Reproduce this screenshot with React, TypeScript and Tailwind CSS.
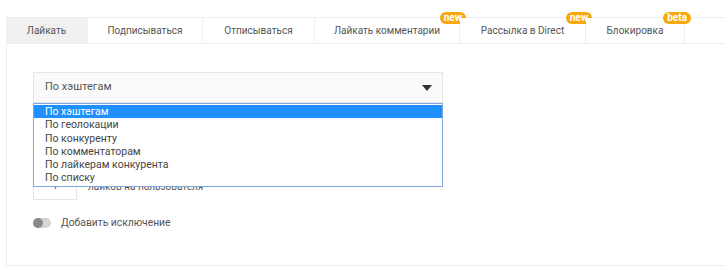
import React from "react";

const tabs = [
  { label: "Лайкать", w: "w-[82px]", active: true },
  { label: "Подписываться", w: "w-[115px]" },
  { label: "Отписываться", w: "w-[112px]" },
  { label: "Лайкать комментарии", w: "w-[145px]", badge: "new" },
  { label: "Рассылка в Direct", w: "w-[126px]", badge: "new" },
  { label: "Блокировка", w: "w-[99px]", badge: "beta" },
];

const options = [
  "По хэштегам",
  "По геолокации",
  "По конкуренту",
  "По комментаторам",
  "По лайкерам конкурента",
  "По списку",
];

const App = () => {
  return (
    <div className="w-[725px] h-[268px] bg-white overflow-hidden pt-[17px] pl-[6px] font-['Roboto',sans-serif] text-[11px] text-[#555]">
      {/* tabs */}
      <div className="flex h-[26px] border-t border-[#eeeeee] text-[10px]">
        {tabs.map((t) => (
          <div
            key={t.label}
            className={`relative ${t.w} flex items-center justify-center border-r border-[#eeeeee] ${
              t.active ? "bg-[#f0f0f0]" : "bg-white"
            }`}
          >
            {t.label}
            {t.badge && (
              <span className="absolute -top-[6px] -right-[7px] h-[12px] px-[4px] rounded-full bg-[#f7a80f] text-white text-[10px] font-bold leading-[12px]">
                {t.badge}
              </span>
            )}
          </div>
        ))}
      </div>

      {/* panel */}
      <div className="relative h-[223px] border-l border-b border-t border-[#eeeeee] pl-[26px] pt-[28px]">
        <div className="relative w-[410px]">
          <div className="h-[31px] flex items-center justify-between border border-[#e6e6e6] bg-[#fafafa] pl-[11px] pr-[10px]">
            <span>По хэштегам</span>
            <svg width="10" height="6" viewBox="0 0 10 6">
              <path d="M0 0h10L5 6z" fill="#333" />
            </svg>
          </div>

          {/* open list */}
          <div className="absolute left-0 top-[31px] w-[410px] z-10 border border-[#7ea6e0] bg-white py-[1px] text-[#444] text-[10.5px]">
            {options.map((o, i) => (
              <div
                key={o}
                className={`h-[13.3px] leading-[13.3px] pl-[11px] ${
                  i === 0 ? "bg-[#1e90ff] text-white" : ""
                }`}
              >
                {o}
              </div>
            ))}
          </div>

          {/* content hidden by list */}
          <div className="mt-[67px] flex items-center gap-[11px] text-[10px]">
            <div className="w-[44px] h-[30px] border border-[#e6e6e6] flex items-center justify-center">
              1
            </div>
            <span className="mt-[2px]">лайков на пользователя</span>
          </div>
        </div>

        <div className="mt-[15px] flex items-center gap-[10px] text-[10.3px]">
          <div className="relative w-[18px] h-[10px] rounded-full bg-[#d4d4d4]">
            <div className="absolute left-0 top-0 w-[10px] h-[10px] rounded-full bg-[#8a8a8a]" />
          </div>
          <span>Добавить исключение</span>
        </div>
      </div>
    </div>
  );
};

export default App;
